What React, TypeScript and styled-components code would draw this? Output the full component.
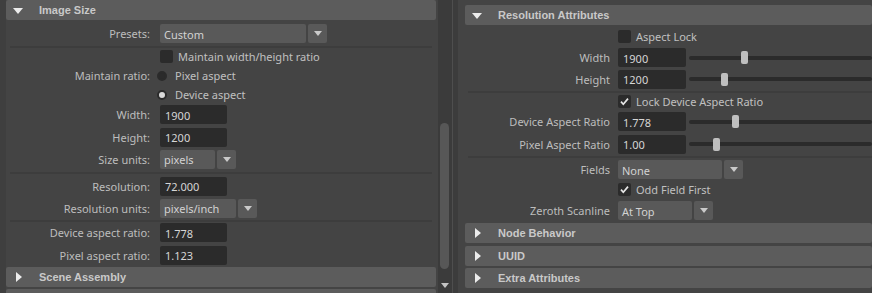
import React from 'react'
import styled, { createGlobalStyle } from 'styled-components'

const GlobalStyle = createGlobalStyle`
  html, body {
    margin: 0;
    padding: 0;
    background: #444444;
  }
  body {
    font-family: 'Noto Sans', 'Open Sans', Arial, sans-serif;
    font-size: 11px;
    color: #bdbdbd;
  }
`

const Screen = styled.div`
  display: flex;
  width: 872px;
  height: 293px;
  overflow: hidden;
  background: #444444;
`

const LeftPane = styled.div`
  display: flex;
  flex: none;
  height: 100%;
`

const Gutter = styled.div`
  width: 6px;
  flex: none;
  background: #3f3f3f;
`

const Column = styled.div<{ $width?: number }>`
  display: flex;
  flex-direction: column;
  flex: ${({ $width }) => ($width ? 'none' : '1')};
  width: ${({ $width }) => ($width ? `${$width}px` : 'auto')};
  min-width: 0;
`

const LeftContent = styled(Column)`
  margin-right: 2px;
`

const ScrollColumn = styled.div`
  width: 14px;
  flex: none;
  background: #3b3b3b;
  display: flex;
  flex-direction: column;
  align-items: center;
  padding-top: 123px;
  box-sizing: border-box;
`

const ScrollThumb = styled.div`
  width: 9px;
  height: 146px;
  margin-left: -2px;
  border-radius: 5px;
  background: #575757;
`

const ScrollArrow = styled.div`
  margin-top: 14px;
  width: 0;
  height: 0;
  border-left: 4px solid transparent;
  border-right: 4px solid transparent;
  border-top: 5px solid #c4c4c4;
`

const Divider = styled.div`
  width: 5px;
  flex: none;
  background: #3c3c3c;
  border-left: 1px solid #4e4e4e;
`

const RightPane = styled(Column)`
  padding: 5px 0 0 7px;
  overflow: hidden;
`

const Header = styled.div<{ $open?: boolean; $mb?: number }>`
  position: relative;
  height: 20px;
  flex: none;
  display: flex;
  align-items: center;
  padding-left: 33px;
  margin-bottom: ${({ $open, $mb }) => $mb ?? ($open ? 1 : 2)}px;
  background: #5c5c5c;
  border-radius: 2px;
  font-family: 'Liberation Sans', Arial, sans-serif;
  font-weight: bold;
  font-size: 11px;
  color: #c9c9c9;
`

const Caret = styled.span<{ $open?: boolean }>`
  position: absolute;
  width: 0;
  height: 0;
  ${({ $open }) =>
    $open
      ? `
    left: 7px;
    top: 8px;
    border-left: 5px solid transparent;
    border-right: 5px solid transparent;
    border-top: 6px solid #ececec;
  `
      : `
    left: 10px;
    top: 5px;
    border-top: 5px solid transparent;
    border-bottom: 5px solid transparent;
    border-left: 6px solid #ececec;
  `}
`

const Row = styled.div<{ $h: number }>`
  display: flex;
  align-items: center;
  height: ${({ $h }) => $h}px;
  flex: none;
`

const Label = styled.div<{ $w: number; $gap: number }>`
  width: ${({ $w }) => $w}px;
  margin-right: ${({ $gap }) => $gap}px;
  flex: none;
  text-align: right;
  white-space: nowrap;
`

const Separator = styled.div<{ $h: number; $inset: string }>`
  height: ${({ $h }) => $h}px;
  flex: none;
  display: flex;
  align-items: center;
  margin: ${({ $inset }) => $inset};
  &::after {
    content: '';
    flex: 1;
    height: 2px;
    background: #3d3d3d;
  }
`

const Field = styled.div<{ $w: number }>`
  width: ${({ $w }) => $w}px;
  height: 19px;
  flex: none;
  box-sizing: border-box;
  padding: 1px 0 0 5px;
  display: flex;
  align-items: center;
  background: #2b2b2b;
  border-radius: 2px;
  color: #d6d6d6;
`

const DropWrap = styled.div`
  display: flex;
  gap: 2px;
  height: 19px;
  flex: none;
`

const DropMain = styled.div<{ $w: number }>`
  width: ${({ $w }) => $w}px;
  box-sizing: border-box;
  padding: 1px 0 0 4px;
  display: flex;
  align-items: center;
  background: #595959;
  border-radius: 2px;
  color: #d2d2d2;
`

const DropButton = styled.div`
  width: 19px;
  display: flex;
  align-items: center;
  justify-content: center;
  background: #595959;
  border-radius: 2px;
  &::after {
    content: '';
    width: 0;
    height: 0;
    border-left: 4.5px solid transparent;
    border-right: 4.5px solid transparent;
    border-top: 5px solid #cacaca;
  }
`

const CheckWrap = styled.div`
  display: flex;
  align-items: center;
  gap: 5px;
  color: #c0c0c0;
`

const Box = styled.div`
  width: 13px;
  height: 13px;
  border-radius: 2px;
  background: #2b2b2b;
  display: flex;
  align-items: center;
  justify-content: center;
`

const RadioWrap = styled.div`
  display: flex;
  align-items: center;
  gap: 8px;
  margin-left: -3px;
  color: #c0c0c0;
`

const RadioDot = styled.div<{ $on?: boolean }>`
  width: 10px;
  height: 10px;
  border-radius: 50%;
  box-sizing: border-box;
  background: ${({ $on }) => ($on ? '#d9d9d9' : '#2b2b2b')};
  border: 2px solid #2b2b2b;
`

const Slider = styled.div`
  position: relative;
  flex: 1;
  height: 4px;
  margin-left: 3px;
  border-radius: 2px;
  background: #2b2b2b;
`

const Thumb = styled.div<{ $pos: number }>`
  position: absolute;
  left: ${({ $pos }) => $pos}px;
  top: -4.5px;
  width: 7px;
  height: 13px;
  border-radius: 2px;
  background: #bfbfbf;
`

const Check = ({ on }: { on?: boolean }) => (
  <Box>
    {on && (
      <svg width="11" height="11" viewBox="0 0 11 11">
        <path d="M2 5.6 L4.3 8.2 L9 2.6" fill="none" stroke="#e6e6e6" strokeWidth="1.7" />
      </svg>
    )}
  </Box>
)

const Dropdown = ({ w, value }: { w: number; value: string }) => (
  <DropWrap>
    <DropMain $w={w}>{value}</DropMain>
    <DropButton />
  </DropWrap>
)

const L = { w: 144, gap: 10 }
const R = { w: 145, gap: 8 }

export default function App() {
  return (
    <>
      <GlobalStyle />
      <Screen>
        <LeftPane>
          <Gutter />
          <LeftContent $width={430}>
            <Header $open>
              <Caret $open />
              Image Size
            </Header>
            <Row $h={25}>
              <Label $w={L.w} $gap={L.gap}>Presets:</Label>
              <Dropdown w={146} value="Custom" />
            </Row>
            <Separator $h={2} $inset="0 4px" />
            <Row $h={17}>
              <Label $w={L.w} $gap={L.gap} />
              <CheckWrap>
                <Check />
                Maintain width/height ratio
              </CheckWrap>
            </Row>
            <Row $h={21}>
              <Label $w={L.w} $gap={L.gap}>Maintain ratio:</Label>
              <RadioWrap>
                <RadioDot />
                Pixel aspect
              </RadioWrap>
            </Row>
            <Row $h={17}>
              <Label $w={L.w} $gap={L.gap} />
              <RadioWrap>
                <RadioDot $on />
                Device aspect
              </RadioWrap>
            </Row>
            <Row $h={23}>
              <Label $w={L.w} $gap={L.gap}>Width:</Label>
              <Field $w={67}>1900</Field>
            </Row>
            <Row $h={22}>
              <Label $w={L.w} $gap={L.gap}>Height:</Label>
              <Field $w={67}>1200</Field>
            </Row>
            <Row $h={22}>
              <Label $w={L.w} $gap={L.gap}>Size units:</Label>
              <Dropdown w={55} value="pixels" />
            </Row>
            <Separator $h={5} $inset="0 4px" />
            <Row $h={22}>
              <Label $w={L.w} $gap={L.gap}>Resolution:</Label>
              <Field $w={67}>72.000</Field>
            </Row>
            <Row $h={22}>
              <Label $w={L.w} $gap={L.gap}>Resolution units:</Label>
              <Dropdown w={76} value="pixels/inch" />
            </Row>
            <Separator $h={3} $inset="0 4px" />
            <Row $h={21}>
              <Label $w={L.w} $gap={L.gap}>Device aspect ratio:</Label>
              <Field $w={67}>1.778</Field>
            </Row>
            <Row $h={24}>
              <Label $w={L.w} $gap={L.gap}>Pixel aspect ratio:</Label>
              <Field $w={67}>1.123</Field>
            </Row>
            <Header>
              <Caret />
              Scene Assembly
            </Header>
            <Header />
          </LeftContent>
          <ScrollColumn>
            <ScrollThumb />
            <ScrollArrow />
          </ScrollColumn>
          <Divider />
        </LeftPane>

        <RightPane>
          <Header $open>
            <Caret $open />
            Resolution Attributes
          </Header>
          <Row $h={21}>
            <Label $w={R.w} $gap={R.gap} />
            <CheckWrap>
              <Check />
              Aspect Lock
            </CheckWrap>
          </Row>
          <Row $h={21}>
            <Label $w={R.w} $gap={R.gap}>Width</Label>
            <Field $w={68}>1900</Field>
            <Slider>
              <Thumb $pos={52} />
            </Slider>
          </Row>
          <Row $h={22}>
            <Label $w={R.w} $gap={R.gap}>Height</Label>
            <Field $w={68}>1200</Field>
            <Slider>
              <Thumb $pos={32} />
            </Slider>
          </Row>
          <Separator $h={3} $inset="0 0 0 3px" />
          <Row $h={17}>
            <Label $w={R.w} $gap={R.gap} />
            <CheckWrap>
              <Check on />
              Lock Device Aspect Ratio
            </CheckWrap>
          </Row>
          <Row $h={23}>
            <Label $w={R.w} $gap={R.gap}>Device Aspect Ratio</Label>
            <Field $w={68}>1.778</Field>
            <Slider>
              <Thumb $pos={43} />
            </Slider>
          </Row>
          <Row $h={22}>
            <Label $w={R.w} $gap={R.gap}>Pixel Aspect Ratio</Label>
            <Field $w={68}>1.00</Field>
            <Slider>
              <Thumb $pos={24} />
            </Slider>
          </Row>
          <Separator $h={3} $inset="0 0 0 3px" />
          <Row $h={23}>
            <Label $w={R.w} $gap={R.gap}>Fields</Label>
            <Dropdown w={104} value="None" />
          </Row>
          <Row $h={17}>
            <Label $w={R.w} $gap={R.gap} />
            <CheckWrap>
              <Check on />
              Odd Field First
            </CheckWrap>
          </Row>
          <Row $h={25}>
            <Label $w={R.w} $gap={R.gap}>Zeroth Scanline</Label>
            <Dropdown w={74} value="At Top" />
          </Row>
          <Header $mb={3}>
            <Caret />
            Node Behavior
          </Header>
          <Header>
            <Caret />
            UUID
          </Header>
          <Header>
            <Caret />
            Extra Attributes
          </Header>
        </RightPane>
      </Screen>
    </>
  )
}
